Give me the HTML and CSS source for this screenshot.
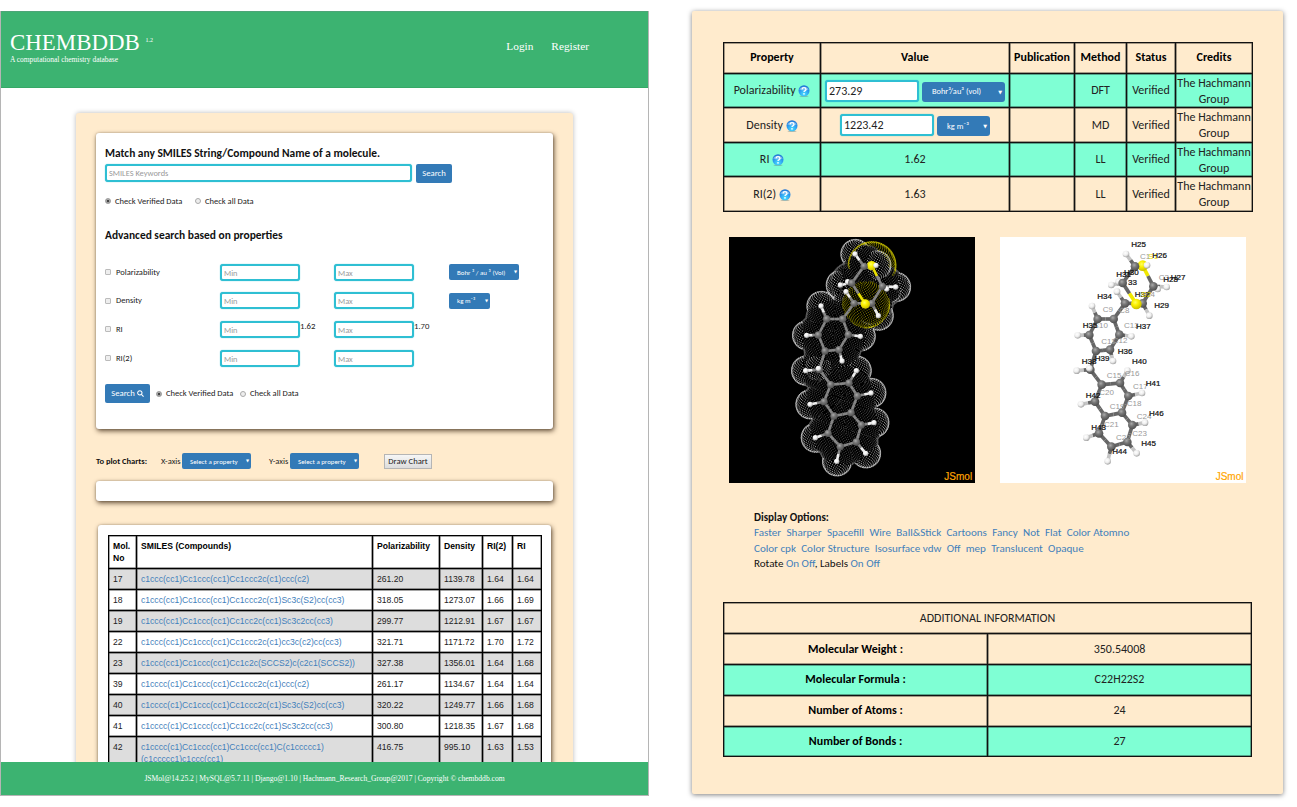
FILE: index.html
```html
<!DOCTYPE html>
<html lang="en">
<head>
<meta charset="utf-8">
<title>CHEMBDDB</title>
<link rel="stylesheet" href="styles.css">
</head>
<body>
<main class="page">
  <section class="app">
    <header class="topbar">
      <div class="brand">
        <h1 class="brand-name">CHEMBDDB <sup class="version">1.2</sup></h1>
        <p class="tagline">A computational chemistry database</p>
      </div>
      <nav class="nav"><a>Login</a><a>Register</a></nav>
    </header>
    <div class="content">
      <div class="card search">
        <h2 class="title">Match any SMILES String/Compound Name of a molecule.</h2>
        <div class="keyword"><div class="field wide">SMILES Keywords</div><div class="btn">Search</div></div>
        <div class="checks"><i class="radio on"></i><span class="check-a">Check Verified Data</span><i class="radio"></i><span>Check all Data</span></div>
        <h2 class="title adv">Advanced search based on properties</h2>
        <div class="prop"><i class="box"></i><span class="prop-name">Polarizability</span><div class="field">Min</div><span class="hint"></span><div class="field">Max</div><span class="hint"></span><div class="select unit-vol"><span>Bohr ³ / au ³ (Vol)</span><b>▼</b></div></div>
        <div class="prop"><i class="box"></i><span class="prop-name">Density</span><div class="field">Min</div><span class="hint"></span><div class="field">Max</div><span class="hint"></span><div class="select unit-den"><span>kg m⁻³</span><b>▼</b></div></div>
        <div class="prop"><i class="box"></i><span class="prop-name">RI</span><div class="field">Min</div><span class="hint">1.62</span><div class="field">Max</div><span class="hint">1.70</span></div>
        <div class="prop"><i class="box"></i><span class="prop-name">RI(2)</span><div class="field">Min</div><span class="hint"></span><div class="field">Max</div><span class="hint"></span></div>
        <div class="checks submit"><div class="btn with-icon">Search <svg class="lens" viewBox="0 0 16 16"><circle cx="6.5" cy="6.5" r="5" /><path d="M10 10l5 5" /></svg></div><i class="radio on"></i><span class="check-b">Check Verified Data</span><i class="radio"></i><span>Check all Data</span></div>
      </div>
      <div class="plot">
        <strong class="plot-title">To plot Charts:</strong>
        <span class="axis">X-axis</span><div class="select axis-select"><span>Select a property</span><b>▼</b></div>
        <span class="axis axis-y">Y-axis</span><div class="select axis-select"><span>Select a property</span><b>▼</b></div>
        <div class="draw">Draw Chart</div>
      </div>
      <div class="card chart"></div>
      <div class="card results">
        <table class="mols">
          <colgroup><col class="m1"><col class="m2"><col class="m3"><col class="m4"><col class="m5"><col class="m6"></colgroup>
          <tr class="head"><th>Mol. No</th><th>SMILES (Compounds)</th><th>Polarizability</th><th>Density</th><th>RI(2)</th><th>RI</th></tr>
          <tr><td>17</td><td><a>c1ccc(cc1)Cc1ccc(cc1)Cc1ccc2c(c1)ccc(c2)</a></td><td>261.20</td><td>1139.78</td><td>1.64</td><td>1.64</td></tr>
          <tr><td>18</td><td><a>c1ccc(cc1)Cc1ccc(cc1)Cc1ccc2c(c1)Sc3c(S2)cc(cc3)</a></td><td>318.05</td><td>1273.07</td><td>1.66</td><td>1.69</td></tr>
          <tr><td>19</td><td><a>c1ccc(cc1)Cc1ccc(cc1)Cc1cc2c(cc1)Sc3c2cc(cc3)</a></td><td>299.77</td><td>1212.91</td><td>1.67</td><td>1.67</td></tr>
          <tr><td>22</td><td><a>c1ccc(cc1)Cc1ccc(cc1)Cc1ccc2c(c1)cc3c(c2)cc(cc3)</a></td><td>321.71</td><td>1171.72</td><td>1.70</td><td>1.72</td></tr>
          <tr><td>23</td><td><a>c1ccc(cc1)Cc1ccc(cc1)Cc1c2c(SCCS2)c(c2c1(SCCS2))</a></td><td>327.38</td><td>1356.01</td><td>1.64</td><td>1.68</td></tr>
          <tr><td>39</td><td><a>c1cccc(c1)Cc1ccc(cc1)Cc1ccc2c(c1)ccc(c2)</a></td><td>261.17</td><td>1134.67</td><td>1.64</td><td>1.64</td></tr>
          <tr><td>40</td><td><a>c1cccc(c1)Cc1ccc(cc1)Cc1ccc2c(c1)Sc3c(S2)cc(cc3)</a></td><td>320.22</td><td>1249.77</td><td>1.66</td><td>1.68</td></tr>
          <tr><td>41</td><td><a>c1cccc(c1)Cc1ccc(cc1)Cc1cc2c(cc1)Sc3c2cc(cc3)</a></td><td>300.80</td><td>1218.35</td><td>1.67</td><td>1.68</td></tr>
          <tr class="tall"><td>42</td><td><a>c1cccc(c1)Cc1ccc(cc1)Cc1ccc(cc1)C(c1ccccc1)<br>(c1ccccc1)c1ccc(cc1)</a></td><td>416.75</td><td>995.10</td><td>1.63</td><td>1.53</td></tr>
        </table>
      </div>
    </div>
    <footer class="footer">JSMol@14.25.2 | MySQL@5.7.11 | Django@1.10 | Hachmann_Research_Group@2017 | Copyright © chembddb.com</footer>
  </section>

  <section class="detail">
    <svg class="defs" width="0" height="0">
      <defs>
        <radialGradient id="q" cx=".5" cy=".8" r=".8"><stop offset="0" stop-color="#4be0ff"/><stop offset=".55" stop-color="#2c9df0"/><stop offset="1" stop-color="#1c6fd2"/></radialGradient>
        <radialGradient id="gC" cx=".4" cy=".35" r=".7"><stop offset="0" stop-color="#aaa"/><stop offset=".4" stop-color="#777"/><stop offset="1" stop-color="#4a4a4a"/></radialGradient>
        <radialGradient id="gH" cx=".4" cy=".35" r=".7"><stop offset="0" stop-color="#fff"/><stop offset=".5" stop-color="#eee"/><stop offset="1" stop-color="#999"/></radialGradient>
        <radialGradient id="gS" cx=".4" cy=".35" r=".7"><stop offset="0" stop-color="#ffff60"/><stop offset=".4" stop-color="#fbf000"/><stop offset="1" stop-color="#c4b800"/></radialGradient>
        <symbol id="help" viewBox="0 0 24 24"><ellipse cx="12" cy="22.500" rx="9" ry="1.500" fill="#688" opacity=".5"/><circle cx="12" cy="11.500" r="11" fill="url(#q)"/><path d="M2.500 9a10 8 0 0 1 19 0q-9.500 4-19 0z" fill="#fff" opacity=".35"/><path d="M8 8.800q.3-3.600 4-3.600t4 3.300q0 2-2.200 3.100-1.800 1-1.800 2.600" fill="none" stroke="#fff" stroke-width="2.700"/><circle cx="12" cy="17.600" r="1.700" fill="#fff"/></symbol>
      </defs>
    </svg>
    <table class="props">
      <colgroup><col class="p1"><col class="p2"><col class="p3"><col class="p4"><col class="p5"><col class="p6"></colgroup>
      <tr class="head"><th>Property</th><th>Value</th><th>Publication</th><th>Method</th><th>Status</th><th>Credits</th></tr>
      <tr class="mint"><td>Polarizability <svg class="help"><use href="#help"/></svg></td><td><div class="value"><div class="field big">273.29</div><div class="select big-select vol"><span>Bohr³/au³ (vol)</span><b>▼</b></div></div></td><td></td><td>DFT</td><td>Verified</td><td class="credit">The Hachmann<br>Group</td></tr>
      <tr><td>Density <svg class="help"><use href="#help"/></svg></td><td><div class="value"><div class="field big">1223.42</div><div class="select big-select"><span>kg m⁻³</span><b>▼</b></div></div></td><td></td><td>MD</td><td>Verified</td><td class="credit">The Hachmann<br>Group</td></tr>
      <tr class="mint"><td>RI <svg class="help"><use href="#help"/></svg></td><td>1.62</td><td></td><td>LL</td><td>Verified</td><td class="credit">The Hachmann<br>Group</td></tr>
      <tr><td>RI(2) <svg class="help"><use href="#help"/></svg></td><td>1.63</td><td></td><td>LL</td><td>Verified</td><td class="credit">The Hachmann<br>Group</td></tr>
    </table>
    <div class="viewers">
      <svg class="viewer dark" id="surface" viewBox="12 14 738 738"></svg>
      <svg class="viewer light" id="labelled" viewBox="12 14 738 738"></svg>
    </div>
    <div class="options">
      <p><strong>Display Options:</strong></p>
      <p class="links"><a>Faster</a><a>Sharper</a><a>Spacefill</a><a>Wire</a><a>Ball&amp;Stick</a><a>Cartoons</a><a>Fancy</a><a>Not</a><a>Flat</a><a>Color Atomno</a></p>
      <p class="links"><a>Color cpk</a><a>Color Structure</a><a>Isosurface vdw</a><a>Off</a><a>mep</a><a>Translucent</a><a>Opaque</a></p>
      <p>Rotate <a>On</a> <a>Off</a>, Labels <a>On</a> <a>Off</a></p>
    </div>
    <table class="info">
      <tr><td colspan="2">ADDITIONAL INFORMATION</td></tr>
      <tr><th>Molecular Weight :</th><td>350.54008</td></tr>
      <tr class="mint"><th>Molecular Formula :</th><td>C22H22S2</td></tr>
      <tr><th>Number of Atoms :</th><td>24</td></tr>
      <tr class="mint"><th>Number of Bonds :</th><td>27</td></tr>
    </table>
  </section>
</main>
<script src="molecule.js"></script>
</body>
</html>
```
FILE: styles.css
```css
* { box-sizing: border-box; }
body { margin: 0; background: #fff; color: #333; font: 8px/11px Calibri, Carlito, Lato, sans-serif; }
h1, h2, p { margin: 0; }
a { color: #3f80bb; }
.page { display: flex; align-items: flex-start; gap: 43px; width: 1297px; height: 807px; padding-top: 11px; overflow: hidden; }

.app { position: relative; flex: none; width: 649px; height: 785px; overflow: hidden; border: solid #b5b5b5; border-width: 0 1px 1px; }
.topbar { display: flex; justify-content: space-between; height: 77px; padding: 19px 59px 0 9px; background: #3cb371; color: #fff; font-family: "Liberation Serif", serif; border-bottom: 1px solid #36a866; border-top: 1px solid #4da578; }
.brand-name { font-size: 22.900px; line-height: 24px; font-weight: 400; }
.version { font-size: 6px; vertical-align: 8px; line-height: 0; }
.tagline { font-size: 7.450px; line-height: 10px; }
.nav { display: flex; gap: 18px; padding-top: 8px; font-size: 11.300px; line-height: 15px; }
.nav a { color: #fff; }

.content { width: 497px; height: 720px; margin: 25px 0 0 75px; padding: 20px; background: #ffebcd; border-radius: 3px; box-shadow: 0 0 5px rgba(0, 0, 0, .28); }
.card { background: #fff; border-radius: 3px; box-shadow: 1px 2px 5px rgba(60, 40, 20, .8), 0 0 2px rgba(60, 40, 20, .3); }
.search { width: 457px; height: 296px; padding: 13px 9px 0; }
.title { height: 15px; font-size: 11.450px; line-height: 15px; color: #111; white-space: nowrap; }
.keyword { display: flex; gap: 4px; margin-top: 3px; }
.field { width: 80px; height: 17px; padding: 0 2px; border: 2px solid #2fbfd3; border-radius: 3px; background: #fff; color: #999; font-size: 8.400px; line-height: 14px; flex: none; box-shadow: 0 0 1px #2fbfd3; }
.wide { width: 307px; height: 18px; }
.btn { width: 36px; height: 19px; background: #337ab7; border-radius: 2px; color: #fff; font-size: 8.700px; line-height: 19px; text-align: center; white-space: nowrap; }
.checks { display: flex; align-items: center; height: 12px; margin-top: 12px; font-size: 8.500px; color: #222; white-space: nowrap; }
.radio { flex: none; width: 6px; height: 6px; border: 1px solid #aaa; border-radius: 50%; background: #eee; margin-right: 4px; }
.radio.on { background: #444; box-shadow: inset 0 0 0 .5px #eee; }
.check-a { width: 80px; }
.adv { margin: 21px 0 15px; }
.prop { display: flex; align-items: center; height: 28.600px; color: #222; }
.box { width: 6px; height: 6px; border: 1px solid #bbb; border-radius: 1px; background: #eee; margin-right: 5px; }
.prop-name { width: 104px; font-size: 8.500px; }
.hint { width: 34px; padding-bottom: 5px; font-size: 8.700px; }
.select { display: flex; align-items: center; justify-content: space-between; height: 16px; padding: 0 2px 0 8px; background: #337ab7; color: #fff; border-radius: 2px; font-size: 6.900px; white-space: nowrap; }
.select b { font: 4px/6px "DejaVu Sans", sans-serif; }
.unit-vol { width: 70px; margin-left: 1px; }
.unit-den { width: 41px; margin-left: 1px; }
.submit { height: 19px; margin-top: 12px; }
.with-icon { width: 45px; margin-right: 6px; }
.lens { width: 7px; height: 7px; vertical-align: -1px; fill: none; stroke: #fff; stroke-width: 2.400; }
.check-b { width: 74px; }
.plot { display: flex; align-items: center; height: 16px; margin-top: 24px; color: #222; white-space: nowrap; }
.plot-title { width: 65px; font-size: 8.500px; color: #111; }
.axis { width: 21px; font-size: 8.500px; }
.axis-y { margin-left: 18px; }
.axis-select { width: 69px; }
.draw { width: 48px; height: 15px; margin-left: 25px; border: 1px solid #b5b5b5; background: linear-gradient(#f6f6f6, #ddd); font-size: 8.600px; line-height: 13px; text-align: center; }
.chart { height: 20px; margin-top: 12px; width: 457px; }
.results { width: 453px; height: 300px; margin: 24px 2px 0; padding: 10px; }

table { border-collapse: collapse; table-layout: fixed; }
th, td { box-shadow: inset 0 0 0 .5px rgba(0, 0, 0, .7); }
.mols { width: 433px; font-family: "Liberation Sans", sans-serif; font-size: 8.600px; line-height: 12px; }
.mols td, .mols th { border: 1px solid #000; padding: 4px; text-align: left; vertical-align: top; color: #222; white-space: nowrap; }
.mols th { color: #000; white-space: normal; }
.mols a { color: #3f80bb; }
.mols tr { height: 21px; }
.mols .head { height: 33px; }
.mols .tall { height: 60px; }
.mols tr:nth-child(even) { background: #ddd; }
.m1 { width: 28px; } .m2 { width: 236px; } .m3 { width: 67px; } .m4 { width: 43px; } .m5 { width: 30px; } .m6 { width: 29px; }
.footer { position: absolute; left: 0; right: 0; bottom: 0; height: 33px; background: #3cb371; color: #fff; font: 7.580px/34px "Liberation Serif", serif; text-align: center; }

.detail { position: relative; flex: none; width: 591px; height: 783px; padding: 31px; background: #ffebcd; border-radius: 2px; box-shadow: 0 1px 5px rgba(0, 0, 0, .5); }
.defs { position: absolute; }
.props, .info { width: 529px; font-size: 12px; line-height: 17px; color: #222; text-align: center; }
.props td, .props th, .info td, .info th { border: 1px solid #111; padding: 0; white-space: nowrap; }
.props tr { height: 34.500px; }
.props .head, .info tr { height: 30.800px; }
.props th, .info th { color: #000; }
.props .credit { line-height: 16px; }
.mint { background: #7fffd4; }
.p1 { width: 97px; } .p2 { width: 189px; } .p3 { width: 65px; } .p4 { width: 52px; } .p5 { width: 49px; } .p6 { width: 77px; }
.help { width: 12px; height: 12px; vertical-align: -3px; }
.value { display: flex; align-items: center; justify-content: center; gap: 3px; text-align: left; }
.big { width: 94px; height: 22px; font-size: 12px; line-height: 18px; color: #222; }
.big-select { width: 53px; height: 20px; margin-top: 2px; padding: 0 3px 0 10px; font-size: 8.400px; border-radius: 3px; }
.big-select b { font-size: 5px; }
.vol { width: 83px; }
.viewers { display: flex; gap: 25px; margin: 25px 0 0 6px; }
.viewer { width: 246px; height: 246px; flex: none; }
.dark { background: #000; }
.light { background: #fff; }
.viewer text { font-family: "Liberation Sans", sans-serif; font-size: 24px; }
.viewer .bold { stroke: #111; stroke-width: .7; }
.viewer .logo { font-size: 30px; stroke: #ffa500; stroke-width: .6; }
.options { margin: 27px 0 0 31px; font-size: 11.050px; line-height: 15.400px; color: #111; white-space: nowrap; }
.links { display: flex; gap: 5.300px; }
.info { margin-top: 31px; }
```
FILE: molecule.js
```javascript
const NS = 'http://www.w3.org/2000/svg';
// element, x, y, depth
const atoms = [
  ['C',417,102,20],['S',440,100,-30],['C',380,152,0],['C',472,162,0],['S',421,215,40],['C',387,213,0],['C',440,213,-20],
  ['C',305,260,0],['C',353,260,0],['C',370,307,0],['C',342,352,0],['C',300,356,0],['C',280,308,0],['C',283,412,0],
  ['C',317,457,0],['C',372,452,0],['C',397,491,0],['C',378,541,0],['C',327,551,0],['C',297,508,0],
  ['C',409,578,0],['C',394,629,0],['C',346,643,0],['C',309,603,0],
  ['H',390,65,20],['H',453,99,50],['H',346,158,20],['H',368,148,-20],['H',363,178,20],['H',512,164,0],['H',485,170,-30],['H',460,250,0],
  ['H',288,221,0],['H',245,309,0],['H',406,312,0],['H',351,386,0],['H',242,415,0],['H',280,408,30],['H',394,415,0],['H',438,482,0],
  ['H',255,516,0],['H',447,571,0],['H',271,616,0],['H',422,663,0],['H',335,687,0]
];
const bonds = [[0,1],[0,2],[1,3],[3,6],[6,5],[2,4],[5,8],[7,8],[8,9],[9,10],[10,11],[11,12],[12,7],[11,13],[13,14],
  [14,15],[15,16],[16,17],[17,18],[18,19],[19,14],[17,20],[20,21],[21,22],[22,23],[23,18],
  [0,24],[1,25],[2,26],[2,27],[5,28],[3,29],[3,30],[6,31],[7,32],[12,33],[9,34],[10,35],[13,36],[13,37],[15,38],[16,39],[19,40],[20,41],[23,42],[21,43],[22,44]];
const vdw = { C: 64, S: 72, H: 44 };

function add(svg, tag, attrs, text) {
  const el = document.createElementNS(NS, tag);
  for (const k in attrs) el.setAttribute(k, attrs[k]);
  if (text) el.textContent = text;
  svg.appendChild(el);
}

// Points on each van der Waals sphere that lie outside every other sphere
function dotSurface(svg) {
  const paths = { C: '', S: '', H: '' };
  atoms.forEach(([e, x, y, z], i) => {
    const r = vdw[e], n = Math.round(r * r / 3.6);
    for (let k = 0; k < n; k++) {
      const c = 1 - 2 * (k + .5) / n, s = Math.sqrt(1 - c * c), t = k * 2.399963;
      const px = x + r * s * Math.cos(t), py = y + r * c, pz = z + r * s * Math.sin(t);
      if (pz < z - r * .35) continue;
      if (atoms.some(([f, a, b, d], j) => j !== i && (px-a)**2 + (py-b)**2 + (pz-d)**2 < vdw[f]**2 - 2)) continue;
      paths[e] += `M${px.toFixed(1)} ${py.toFixed(1)}h2.4`;
    }
  });
  add(svg, 'path', { d: paths.C, stroke: '#777', 'stroke-width': 2.2 });
  add(svg, 'path', { d: paths.H, stroke: '#e4e4e4', 'stroke-width': 2.4 });
  add(svg, 'path', { d: paths.S, stroke: '#d8d000', 'stroke-width': 2.2 });
}

function ballAndStick(svg, dark) {
  const tone = dark ? { C: '#858585', S: '#e8e000', H: '#eee' } : { C: '#666', S: '#f0e800', H: '#c4c4c4' };
  const size = dark ? { C: 11, S: 14, H: 8 } : { C: 13, S: 16, H: 10 };
  const w = dark ? 8 : 11;
  bonds.forEach(([i, j]) => {
    const [e, x, y] = atoms[i], [f, a, b] = atoms[j], mx = (x + a) / 2, my = (y + b) / 2;
    add(svg, 'path', { d: `M${x} ${y}L${mx} ${my}`, stroke: tone[e], 'stroke-width': w });
    add(svg, 'path', { d: `M${mx} ${my}L${a} ${b}`, stroke: tone[f], 'stroke-width': w });
  });
  [...atoms].sort((p, q) => p[3] - q[3]).forEach(([e, x, y]) => {
    add(svg, 'circle', { cx: x, cy: y, r: size[e], fill: `url(#g${e})` });
  });
}

const surface = document.getElementById('surface');
dotSurface(surface);
ballAndStick(surface, true);
add(surface, 'text', { x: 658, y: 743, fill: '#ffa500', class: 'logo' }, 'JSmol');

const labelled = document.getElementById('labelled');
ballAndStick(labelled, false);
const carbon = [['C1',432,80],['C8',370,242],['C9',320,239],['C10',292,287],['C13',384,286],['C11',316,335],['C12',350,331],
  ['C15',332,437],['C16',386,432],['C17',411,470],['C20',310,489],['C18',392,521],['C19',341,530],['C21',324,584],['C24',422,560],['C23',409,612],['C22',360,624],['C4',446,193],['C3',488,144]];
const hydrogen = [['H25',406,44],['H26',469,76],['H31',361,135],['H30',384,127],['33',396,158],['H28',502,148],['H27',524,143],['H32',416,193],
  ['H34',304,201],['H29',475,228],['H35',260,287],['H37',420,289],['H36',365,364],['H38',257,396],['H39',296,387],['H40',408,396],['H41',449,461],
  ['H42',269,496],['H46',459,551],['H43',286,594],['H45',436,642],['H44',349,665]];
carbon.forEach(([t, x, y]) => add(labelled, 'text', { x, y, fill: '#999' }, t));
add(labelled, 'text', { x: 457, y: 79, fill: '#eee000' }, 'S1');
hydrogen.forEach(([t, x, y]) => add(labelled, 'text', { x, y, fill: '#111', class: 'bold' }, t));
add(labelled, 'text', { x: 436, y: 193, fill: '#eee000' }, 'S2');
add(labelled, 'text', { x: 659, y: 743, fill: '#ffa500', class: 'logo' }, 'JSmol');
```
